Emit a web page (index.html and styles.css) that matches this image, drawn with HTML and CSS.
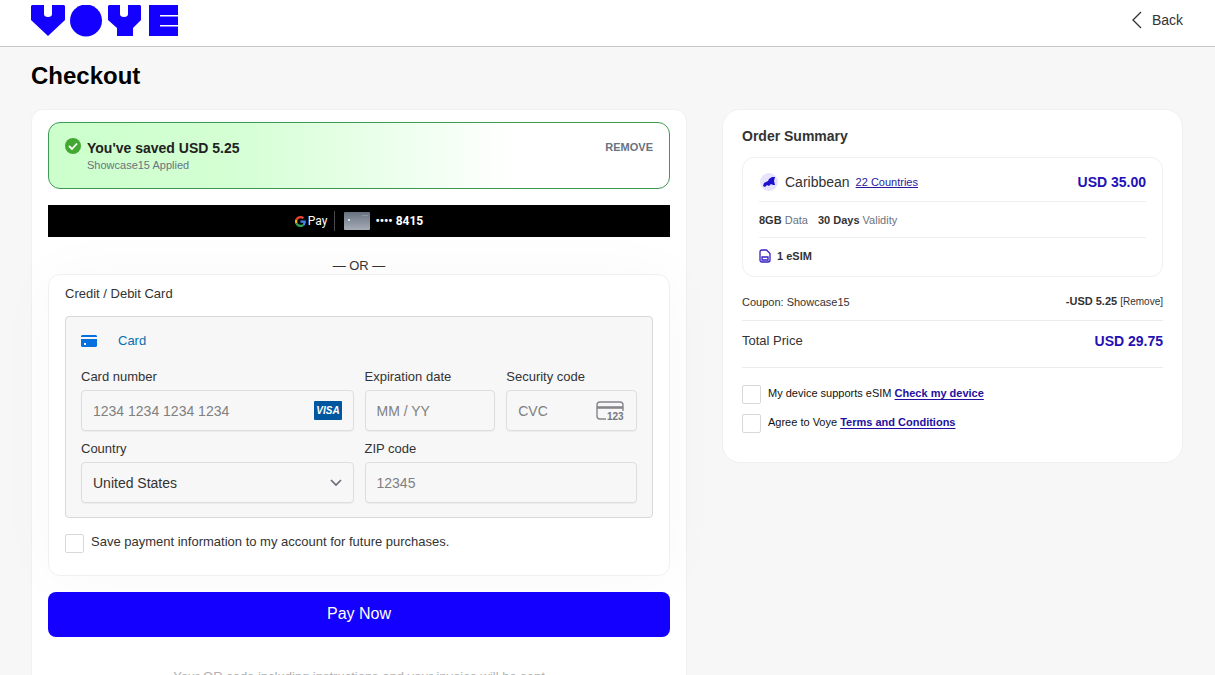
FILE: index.html
```
<!DOCTYPE html>
<html lang="en">
<head>
  <meta charset="UTF-8">
  <meta name="viewport" content="width=device-width, initial-scale=1">
  <title>Checkout - Voye</title>
  <link rel="stylesheet" href="styles.css">
</head>
<body>
  <header class="header">
    <a class="logo" href="#" aria-label="Voye">
      <svg width="148" height="32" viewBox="0 0 148 32" fill="#1400ff">
        <path d="M1 0h12v9q0 3 4 3t4-3V0h12l1 1v14L17 31 0 15V1z"/>
        <circle cx="55" cy="15.500" r="16"/>
        <path d="M78 0h11v9q0 3 4 3t4-3V0h12l1 1v14l-8 8v8H86v-8l-9-8V1z"/>
        <path d="M118 0h29v10h-18v1.500h18v8.500h-18v1.500h18V31h-29z"/>
      </svg>
    </a>
    <a class="back" href="#">
      <svg width="12" height="18" viewBox="0 0 12 18" fill="none" stroke="#333" stroke-width="1.300">
        <path d="M10 1L2 9l8 8"/>
      </svg>
      <span>Back</span>
    </a>
  </header>

  <main class="page">
    <h1 class="page-title">Checkout</h1>
    <div class="columns">

      <section class="payment">
        <div class="promo">
          <svg class="promo-icon" width="16" height="16" viewBox="0 0 16 16">
            <circle cx="8" cy="8" r="8" fill="#43a832"/>
            <path d="M4 8l3 3 5-5.500" fill="none" stroke="#fff" stroke-width="1.800"/>
          </svg>
          <div class="promo-text">
            <strong class="promo-title">You've saved USD 5.25</strong>
            <span class="promo-code">Showcase15 Applied</span>
          </div>
          <button class="promo-remove" type="button">REMOVE</button>
        </div>

        <button class="gpay" type="button">
          <span class="gpay-brand">
            <svg width="11" height="11" viewBox="0 0 48 48">
              <path fill="#ea4335" d="M24 9.500c3.500 0 6.700 1.200 9.200 3.600l6.900-6.900C35.900 2.400 30.500 0 24 0 14.600 0 6.500 5.400 2.600 13.200l8 6.200C12.400 13.700 17.700 9.500 24 9.500z"/>
              <path fill="#4285f4" d="M47 24.600c0-1.600-.2-3.100-.4-4.600H24v9h12.900c-.6 3-2.200 5.500-4.700 7.200l7.700 6C44.400 38 47 32 47 24.600z"/>
              <path fill="#fbbc05" d="M10.500 28.600c-.5-1.500-.8-3-.8-4.600s.3-3.100.8-4.600l-8-6.200C1 16.500 0 20.100 0 24s.9 7.500 2.600 10.800z"/>
              <path fill="#34a853" d="M24 48c6.500 0 11.900-2.100 15.900-5.800l-7.700-6c-2.200 1.400-4.900 2.300-8.200 2.300-6.300 0-11.600-4.200-13.500-9.900l-8 6.200C6.500 42.600 14.600 48 24 48z"/>
            </svg>
            <span>Pay</span>
          </span>
          <span class="gpay-card">
            <svg width="26" height="18" viewBox="0 0 26 18">
              <defs>
                <linearGradient id="cardArt" x1="0" y1="0" x2="0" y2="1">
                  <stop offset="0" stop-color="#66717f"/>
                  <stop offset="1" stop-color="#a7adb7"/>
                </linearGradient>
              </defs>
              <rect width="26" height="18" rx="1" fill="url(#cardArt)"/>
              <rect x="4" y="7" width="2" height="2" fill="#d5dce3"/>
              <path d="M3 11.500h20M18 3.500h6" stroke="#8c96a2"/>
            </svg>
            <span>•••• 8415</span>
          </span>
        </button>

        <p class="or">— OR —</p>

        <div class="method">
          <h2 class="method-title">Credit / Debit Card</h2>
          <div class="card-form">
            <div class="card-tab">
              <svg width="16" height="12" viewBox="0 0 16 12">
                <path d="M1 0h14l1 1v1H0V1z" fill="#0570de"/>
                <path d="M0 4h16v7l-1 1H1l-1-1z" fill="#0570de"/>
                <rect x="3" y="8" width="2" height="2" fill="#fff"/>
              </svg>
              <span>Card</span>
            </div>
            <div class="fields">
              <div class="field field-wide">
                <label for="number">Card number</label>
                <div class="control">
                  <input id="number" type="text" placeholder="1234 1234 1234 1234">
                  <svg class="visa" width="28" height="19" viewBox="0 0 28 19">
                    <rect width="28" height="19" rx="1" fill="#00579f"/>
                    <text x="14" y="13" text-anchor="middle">VISA</text>
                  </svg>
                </div>
              </div>
              <div class="field">
                <label for="expiry">Expiration date</label>
                <div class="control">
                  <input id="expiry" type="text" placeholder="MM / YY">
                </div>
              </div>
              <div class="field">
                <label for="cvc">Security code</label>
                <div class="control">
                  <input id="cvc" type="text" placeholder="CVC">
                  <svg class="cvc" width="29" height="20" viewBox="0 0 29 20">
                    <path d="M10 18H4q-3 0-3-3V4q0-3 3-3h20q3 0 3 3v6" fill="none" stroke="#85858b" stroke-width="1.400"/>
                    <path d="M1 6.500h26" stroke="#85858b" stroke-width="2.600"/>
                    <text x="11" y="19">123</text>
                  </svg>
                </div>
              </div>
              <div class="field field-wide">
                <label for="country">Country</label>
                <div class="control">
                  <select id="country">
                    <option>United States</option>
                  </select>
                  <svg class="chevron" width="12" height="8" viewBox="0 0 12 8" fill="none" stroke="#6d6e78" stroke-width="1.700">
                    <path d="M1 1l5 5 5-5"/>
                  </svg>
                </div>
              </div>
              <div class="field field-wide">
                <label for="zip">ZIP code</label>
                <div class="control">
                  <input id="zip" type="text" placeholder="12345">
                </div>
              </div>
            </div>
          </div>
          <div class="check save-card">
            <input id="save" type="checkbox">
            <label for="save">Save payment information to my account for future purchases.</label>
          </div>
        </div>

        <button class="pay" type="button">Pay Now</button>
        <p class="note">Your QR code including instructions and your invoice will be sent</p>
      </section>

      <aside class="summary">
        <h2 class="summary-title">Order Summary</h2>
        <div class="plan">
          <div class="plan-row plan-head">
            <svg width="20" height="20" viewBox="0 0 20 20">
              <circle cx="10" cy="10" r="9" fill="#e6e3fb"/>
              <path d="M4 14l1-3 4-2 1-2 3-2 3 0-1 4 1 4-2 0-2-1-2 2-2-1-2 2z" fill="#1c0fd0"/>
            </svg>
            <span class="plan-name">Caribbean</span>
            <a class="plan-countries" href="#">22 Countries</a>
            <strong class="price">USD 35.00</strong>
          </div>
          <div class="plan-row plan-details">
            <span><b>8GB</b> Data</span>
            <span><b>30 Days</b> Validity</span>
          </div>
          <div class="plan-row plan-sim">
            <svg width="12" height="14" viewBox="0 0 12 14" fill="none" stroke="#3620c4" stroke-width="1.300">
              <path d="M3 1h4.500L11 4.500V11q0 2-2 2H3q-2 0-2-2V3q0-2 2-2z"/>
              <path d="M3 8h6v3H3z"/>
            </svg>
            <b>1 eSIM</b>
          </div>
        </div>
        <div class="line coupon">
          <span>Coupon: Showcase15</span>
          <span><b>-USD 5.25</b> <button class="coupon-remove" type="button">[Remove]</button></span>
        </div>
        <div class="line total">
          <span>Total Price</span>
          <strong class="price">USD 29.75</strong>
        </div>
        <div class="agreements">
          <div class="check">
            <input id="device" type="checkbox">
            <label for="device">My device supports eSIM <a href="#">Check my device</a></label>
          </div>
          <div class="check">
            <input id="terms" type="checkbox">
            <label for="terms">Agree to Voye <a href="#">Terms and Conditions</a></label>
          </div>
        </div>
      </aside>

    </div>
  </main>
</body>
</html>
```
FILE: styles.css
```
* {
  margin: 0;
  padding: 0;
  box-sizing: border-box;
}

body {
  font-family: "Liberation Sans", Arial, sans-serif;
  font-size: 13px;
  line-height: 16px;
  color: #333333;
  background: #f7f7f7;
}

button,
input,
select {
  font: inherit;
  color: inherit;
}

button {
  border: 0;
  background: none;
  cursor: pointer;
}

svg {
  display: block;
  flex: none;
}

.header {
  display: flex;
  align-items: center;
  justify-content: space-between;
  height: 47px;
  padding: 0 32px 6px 31px;
  background: #ffffff;
  border-bottom: 1px solid #c8c8c8;
}

.logo {
  padding-top: 2px;
}

.back {
  display: flex;
  align-items: center;
  gap: 9px;
  font-size: 14px;
  color: #333333;
  text-decoration: none;
}

.page {
  padding: 15px 32px 32px 31px;
}

.page-title {
  font-size: 24px;
  line-height: 28px;
  color: #000000;
}

.columns {
  display: grid;
  grid-template-columns: 656fr 461fr;
  align-items: start;
  gap: 35px;
  margin-top: 19px;
}

.payment,
.summary {
  background: #ffffff;
  border: 1px solid #f0f0f0;
}

/* Payment column */
.payment {
  padding: 12px 16px 32px;
  border-radius: 12px;
}

.promo {
  display: flex;
  align-items: flex-start;
  gap: 6px;
  padding: 15px 16px;
  border: 1px solid #3c9a52;
  border-radius: 12px;
  background: linear-gradient(90deg, #ccffcc 0%, #d4ffd4 30%, #ffffff 75%);
}

.promo-text {
  flex: 1;
  display: flex;
  flex-direction: column;
  padding-top: 1px;
}

.promo-title {
  font-size: 14px;
  line-height: 18px;
  color: #222222;
}

.promo-code {
  font-size: 11px;
  line-height: 16px;
  color: #6b7280;
}

.promo-remove {
  padding-top: 1px;
  font-size: 11px;
  font-weight: bold;
  color: #6b7280;
}

.gpay {
  display: flex;
  align-items: center;
  justify-content: center;
  width: 100%;
  height: 32px;
  margin-top: 16px;
  background: #000000;
  color: #ffffff;
  font-family: Roboto, sans-serif;
  font-size: 12px;
}

.gpay-brand {
  display: flex;
  align-items: center;
  gap: 2px;
  height: 20px;
  padding-right: 7px;
  border-right: 1px solid #4a4a4a;
}

.gpay-card {
  display: flex;
  align-items: center;
  gap: 5px;
  padding-left: 9px;
  font-weight: bold;
}

.or {
  margin-top: 21px;
  text-align: center;
}

.method {
  padding: 11px 16px 22px;
  background: #ffffff;
  border: 1px solid #f0f0f0;
  border-radius: 12px;
  box-shadow: 0 0 60px rgba(0, 0, 0, 0.03);
}

.method-title {
  font-size: 13px;
  font-weight: normal;
}

.card-form {
  margin-top: 14px;
  padding: 16px 15px 14px;
  background: #f7f7f7;
  border: 1px solid #d8d8d8;
  border-radius: 4px;
}

.card-tab {
  display: flex;
  align-items: center;
  gap: 21px;
  color: #0570b0;
}

.fields {
  display: grid;
  grid-template-columns: repeat(4, minmax(0, 1fr));
  gap: 10px 11px;
  margin-top: 20px;
}

.field-wide {
  grid-column: span 2;
}

.field label {
  display: block;
  margin-bottom: 5px;
}

.control {
  display: flex;
  align-items: center;
  height: 41px;
  padding: 0 11px;
  border: 1px solid #dedede;
  border-radius: 4px;
  box-shadow: 0 1px 1px rgba(0, 0, 0, 0.05);
}

.control input,
.control select {
  flex: 1;
  min-width: 0;
  border: 0;
  outline: 0;
  appearance: none;
  background: transparent;
  font-size: 14px;
}

.control input::placeholder {
  color: #808080;
}

.visa text {
  font-size: 10px;
  font-weight: bold;
  font-style: italic;
  fill: #ffffff;
}

.cvc text {
  font-size: 10px;
  font-weight: bold;
  fill: #75757c;
}

.check {
  display: flex;
  align-items: center;
  gap: 7px;
}

.check input {
  flex: none;
  width: 19px;
  height: 19px;
  appearance: none;
  background: #ffffff;
  border: 1px solid #d8d8d8;
  border-radius: 2px;
}

.check label {
  padding-bottom: 3px;
}

.save-card {
  margin-top: 16px;
}

.pay {
  display: block;
  width: 100%;
  height: 45px;
  margin-top: 16px;
  padding-bottom: 2px;
  border-radius: 8px;
  background: #1400ff;
  color: #ffffff;
  font-size: 16px;
}

.note {
  margin-top: 32px;
  text-align: center;
  color: #b0b0b0;
}

/* Order summary */
.summary {
  padding: 18px 19px 29px;
  border-radius: 18px;
  font-size: 11px;
}

.summary-title {
  font-size: 14px;
}

.plan {
  margin-top: 13px;
  padding: 4px 16px 3px;
  border: 1px solid #f0f0f0;
  border-radius: 12px;
}

.plan-row {
  display: flex;
  align-items: center;
  height: 36px;
}

.plan-row + .plan-row {
  border-top: 1px solid #eeeeee;
}

.plan-head {
  height: 39px;
}

.plan-name {
  margin: 0 6px;
  font-size: 14px;
}

.plan-countries {
  flex: 1;
  color: #2a1a9e;
}

.price {
  font-size: 14px;
  color: #2410b4;
}

.plan-details {
  gap: 10px;
  color: #6b7280;
}

.plan-details b {
  color: #333333;
}

.plan-sim {
  gap: 6px;
}

.line {
  display: flex;
  align-items: center;
  justify-content: space-between;
  border-bottom: 1px solid #ececec;
}

.coupon {
  height: 44px;
  padding-top: 6px;
}

.coupon-remove {
  font-size: 10px;
}

.total {
  height: 47px;
  padding-bottom: 6px;
  font-size: 13px;
}

.agreements {
  display: flex;
  flex-direction: column;
  gap: 10px;
  margin-top: 17px;
}

.agreements label {
  color: #111111;
}

.agreements a {
  font-weight: bold;
  color: #2410a0;
  text-underline-offset: 2px;
}
```
